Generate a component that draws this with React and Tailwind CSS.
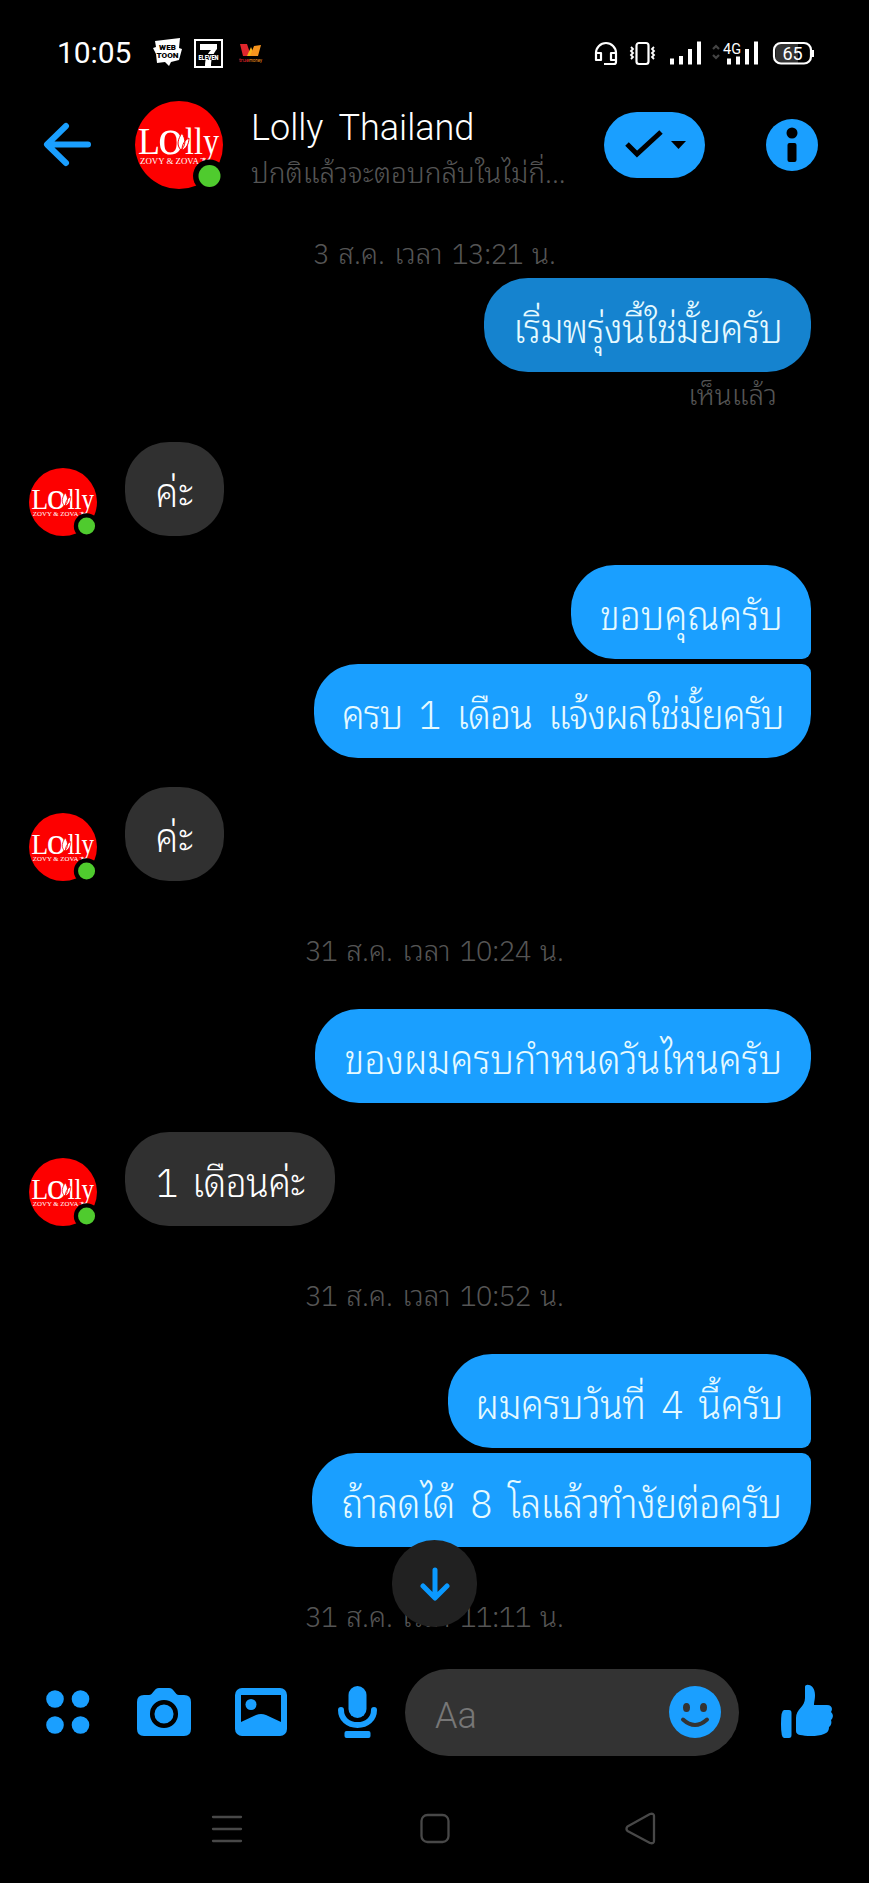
import React from 'react';

const messages = [
  { id: 1, type: 'time', text: '3 ส.ค. เวลา 13:21 น.', box: 'h-[43px] pb-[10px]' },
  { id: 2, type: 'me', text: 'เริ่มพรุ่งนี้ใช่มั้ยครับ', box: 'w-[327px] rounded-[44px] bg-[#1583cf] tracking-[-0.6px]' },
  { id: 3, type: 'seen', text: 'เห็นแล้ว' },
  { id: 4, type: 'them', text: 'ค่ะ', box: 'w-[99px]' },
  { id: 5, type: 'me', text: 'ขอบคุณครับ', box: 'w-[240px] mt-[29px] rounded-[44px] rounded-br-[9px] bg-[#1a9fff]' },
  { id: 6, type: 'me', text: 'ครบ 1 เดือน แจ้งผลใช่มั้ยครับ', box: 'w-[497px] mt-[5px] rounded-[44px] rounded-tr-[9px] bg-[#1a9fff] tracking-[-0.9px] [word-spacing:8px]' },
  { id: 7, type: 'them', text: 'ค่ะ', box: 'w-[99px]', row: 'mt-[29px]' },
  { id: 8, type: 'time', text: '31 ส.ค. เวลา 10:24 น.', box: 'h-[128px] pt-[8px]' },
  { id: 9, type: 'me', text: 'ของผมครบกำหนดวันไหนครับ', box: 'w-[496px] rounded-[44px] bg-[#1a9fff]' },
  { id: 10, type: 'them', text: '1 เดือนค่ะ', box: 'w-[210px] tracking-[-0.6px] [word-spacing:6px]', row: 'mt-[29px]' },
  { id: 11, type: 'time', text: '31 ส.ค. เวลา 10:52 น.', box: 'h-[128px] pt-[8px]' },
  { id: 12, type: 'me', text: 'ผมครบวันที่ 4 นี้ครับ', box: 'w-[363px] rounded-[44px] rounded-br-[9px] bg-[#1a9fff] tracking-[-0.5px] [word-spacing:7px]' },
  { id: 13, type: 'me', text: 'ถ้าลดได้ 8 โลแล้วทำงัยต่อครับ', box: 'w-[499px] mt-[5px] rounded-[44px] rounded-tr-[9px] bg-[#1a9fff] tracking-[-0.6px] [word-spacing:7px]' },
  { id: 14, type: 'time', text: '31 ส.ค. เวลา 11:11 น.', box: 'h-[128px] pt-[8px]' },
];

// Numerals use a face whose "1" has a foot
const MessageText = ({ text, className }) => (
  <span className={className}>
    {text.split(/([\d:]+)/).map((part, i) =>
      i % 2 ? (
        <span key={i} className="leading-[0] tracking-[-0.8px]" style={{fontFamily: '"IBM Plex Sans Thai Looped", Roboto, sans-serif'}}>{part}</span>
      ) : (
        part
      )
    )}
  </span>
);

const Avatar = ({ className }) => (
  <svg className={className} viewBox="0 0 88 88">
    <circle cx="44" cy="44" r="44" fill="#fd0000" />
    <g fill="#fff" fontFamily="Liberation Serif, serif">
      <text x="3" y="53" fontSize="38" textLength="22" lengthAdjust="spacingAndGlyphs">L</text>
      <text x="23" y="53" fontSize="50">o</text>
      <text x="50" y="53" fontSize="38" textLength="34" lengthAdjust="spacingAndGlyphs">lly</text>
      <text x="5" y="62.500" fontSize="8.500" textLength="66" lengthAdjust="spacingAndGlyphs">ZOVY &amp; ZOVA T</text>
    </g>
    <path d="M46 49c-5-5-3-11 1-17 4 7 4 12-1 17zM47 49c0-6 3-10 7-12 0 6-3 11-7 12z" fill="#fff" stroke="#fd0000" strokeWidth="1" />
    <circle cx="74.500" cy="75" r="16.500" fill="#000" />
    <circle cx="74.500" cy="75" r="11" fill="#4fcb2e" />
  </svg>
);

const StatusBar = () => (
  <div className="flex h-[88px] items-center pt-[18px] pl-[57px] pr-[54px]">
    <span className="w-[96px] text-[30px] leading-9 tracking-[-0.1px]">10:05</span>
    <svg className="h-[30px] w-[30px]" viewBox="0 0 30 30">
      <path d="M2 3 27 0l-1 10 3 1-3 11-8 2-2 4-4-4-8 1-1-9-3-6 3-1z" fill="#fff" />
      <text x="6" y="12" fontSize="8" fontWeight="900" fontFamily="Roboto, sans-serif" textLength="17">WEB</text>
      <text x="3.500" y="20" fontSize="8" fontWeight="900" fontFamily="Roboto, sans-serif" textLength="22" lengthAdjust="spacingAndGlyphs">TOON</text>
    </svg>
    <svg className="ml-[11px] h-[29px] w-[29px]" viewBox="0 0 29 29">
      <path d="M0 0h29v29H0z" fill="#fff" />
      <path d="M2 2h25v25H2z" fill="#000" />
      <path d="M6 5h17v5c-4 5-6 9-6 17h-6c0-7 2-12 6-16H6z" fill="#fff" />
      <path d="M4 15h21v6H4z" fill="#000" />
      <text x="4.500" y="20.500" fontSize="6.500" fontWeight="900" fontFamily="Roboto, sans-serif" textLength="20" lengthAdjust="spacingAndGlyphs" fill="#fff">ELEVEN</text>
    </svg>
    <svg className="ml-[15px] h-[22px] w-[26px]" viewBox="0 0 26 22">
      <path d="M2 2h7l4 12H5z" fill="#e0262c" />
      <path d="M13 5l4 9H9z" fill="#f6b21b" />
      <path d="M16 4l7-1-3 11h-8z" fill="#f7941d" />
      <text x="1" y="20" fontSize="5.500" fontFamily="Roboto, sans-serif" textLength="10" lengthAdjust="spacingAndGlyphs" fill="#e0262c">true</text>
      <text x="11" y="20" fontSize="5.500" fontFamily="Roboto, sans-serif" textLength="13" lengthAdjust="spacingAndGlyphs" fill="#f7941d">money</text>
    </svg>
    <svg className="ml-auto h-[26px] w-[222px]" viewBox="0 0 222 26" fill="none" stroke="#fff" strokeWidth="2.200">
      {/* headset */}
      <path d="M3 20V13a10 10 0 0 1 20 0v9q0 2-2 2H11M3 13h5v7H3zM23 13h-5v7h5z" strokeLinejoin="round" />
      {/* vibrate */}
      <rect x="43.500" y="3" width="12" height="21" rx="2.500" />
      <path d="m38 7 2 2-2 2 2 2-2 2 2 2-2 2M61 7l-2 2 2 2-2 2 2 2-2 2 2 2" strokeWidth="1.800" />
      {/* signal */}
      <path d="M79 24.500v-6M88 24.500V16M97 24.500V9M106 24.500V1.500M136 24.500v-6M145 24.500v-8M154 24.500V9M163 24.500V1.500" strokeWidth="4" />
      <path d="m120 9 3-3 3 3M120 15l3 3 3-3" stroke="#444" />
      <text x="130" y="13.500" fontSize="15" fill="#fff" stroke="none" fontFamily="Roboto, sans-serif" textLength="18" lengthAdjust="spacingAndGlyphs">4G</text>
      {/* battery */}
      <rect x="183" y="4" width="22" height="19" fill="#333" stroke="none" />
      <rect x="181" y="3" width="37" height="20.500" rx="7" />
      <path d="M219.500 10v7" strokeWidth="3" />
      <text x="189.500" y="19.500" fontSize="18" fill="#fff" stroke="none" fontFamily="Roboto, sans-serif">65</text>
    </svg>
  </div>
);

const Header = () => (
  <header className="flex h-[113px] items-center pl-[43px] pr-[51px] text-[#1a9fff]">
    <svg className="h-[46px] w-[49px]" viewBox="0 0 49 46" fill="none" stroke="currentColor" strokeWidth="6" strokeLinecap="round" strokeLinejoin="round">
      <path d="M45 22.500H5M23 4 4 22.500 23 41" />
    </svg>
    <Avatar className="ml-[43px] h-[88px] w-[88px]" />
    <div className="ml-[28px] w-[320px] whitespace-nowrap pt-[8px] font-light">
      <h1 className="h-[45px] text-[36px] leading-[46px] text-white [word-spacing:7px]">Lolly Thailand</h1>
      <p className="h-[42px] text-[28px] leading-[42px] text-[#555]" style={{fontFamily: '"Noto Sans Thai Looped", sans-serif'}}>ปกติแล้วจะตอบกลับในไม่กี่...</p>
    </div>
    <button className="ml-auto flex h-[66px] w-[101px] items-center justify-center rounded-[33px] bg-[#1a9fff]">
      <svg className="h-[30px] w-[64px]" viewBox="0 0 64 30">
        <path d="m4 14 10 10L38 2" fill="none" stroke="#000" strokeWidth="5" />
        <path d="M48 11h15l-7.500 8z" fill="#000" />
      </svg>
    </button>
    <svg className="ml-[61px] h-[52px] w-[52px]" viewBox="0 0 52 52">
      <circle cx="26" cy="26" r="26" fill="currentColor" />
      <circle cx="26" cy="14" r="5.500" fill="#000" />
      <rect x="21.500" y="24" width="9" height="19" rx="2" fill="#000" />
    </svg>
  </header>
);

const Message = ({ item }) => {
  if (item.type === 'time') {
    return (
      <div className={`flex shrink-0 items-center justify-center whitespace-nowrap text-[28px] leading-10 text-[#555] [word-spacing:2px] ${item.box}`}>
        <MessageText text={item.text} />
      </div>
    );
  }
  if (item.type === 'seen') {
    return <div className="mr-[92px] h-[70px] shrink-0 self-end whitespace-nowrap text-[28px] leading-[41px] text-[#555]">{item.text}</div>;
  }
  if (item.type === 'them') {
    return (
      <div className={`flex shrink-0 items-end pl-[29px] ${item.row || ''}`}>
        <Avatar className="h-[68px] w-[68px]" />
        <div className={`ml-[28px] flex h-[94px] items-center justify-center whitespace-nowrap rounded-[44px] bg-[#303030] text-[40px] leading-[40px] ${item.box}`}>
          <MessageText text={item.text} className="scale-x-[0.925]" />
        </div>
      </div>
    );
  }
  return (
    <div className={`mr-[58px] flex h-[94px] shrink-0 items-center justify-center self-end whitespace-nowrap text-[40px] leading-[40px] text-[#e6faff] ${item.box}`}>
      <MessageText text={item.text} className="scale-x-[0.93]" />
    </div>
  );
};

const Composer = () => (
  <div className="flex h-[124px] items-center pl-[45px] pr-[36px] text-[#1a9fff]">
    <svg className="h-[46px] w-[46px]" viewBox="0 0 46 46" fill="currentColor">
      <circle cx="10" cy="10" r="8.800" />
      <circle cx="35.500" cy="10" r="8.800" />
      <circle cx="10" cy="36" r="8.800" />
      <circle cx="35.500" cy="36" r="8.800" />
    </svg>
    <svg className="ml-[46px] h-[48px] w-[54px]" viewBox="0 0 54 48">
      <path d="M7 7h5c4 0 5-7 10-7h10c5 0 6 7 10 7h5q7 0 7 7v27q0 7-7 7H7q-7 0-7-7V14q0-7 7-7z" fill="currentColor" />
      <circle cx="27" cy="26" r="11.800" fill="currentColor" stroke="#000" strokeWidth="4.500" />
    </svg>
    <svg className="ml-[44px] h-[48px] w-[52px]" viewBox="0 0 52 48">
      <rect width="52" height="48" rx="7" fill="currentColor" />
      <path d="M6 7h40v27L31 27q-5-2-10 0L6 34z" fill="#000" />
      <circle cx="16" cy="16.500" r="5.500" fill="currentColor" />
    </svg>
    <svg className="ml-[51px] h-[52px] w-[39px]" viewBox="0 0 39 52" fill="currentColor">
      <rect x="10.500" width="18" height="32" rx="9" />
      <path d="M3 24c0 9 7 15 16.500 15S36 33 36 24" fill="none" stroke="currentColor" strokeWidth="6" strokeLinecap="round" />
      <rect x="6.500" y="45" width="26" height="7" rx="2" />
    </svg>
    <div className="ml-[28px] flex h-[87px] w-[334px] items-center justify-between rounded-full bg-[#333] pl-[30px] pr-[18px]">
      <span className="pt-[7px] text-[36px] font-light text-[#777]">Aa</span>
      <svg className="h-[52px] w-[52px]" viewBox="0 0 52 52">
        <circle cx="26" cy="26" r="26" fill="currentColor" />
        <ellipse cx="17.500" cy="21.500" rx="3.500" ry="4.500" fill="#333" />
        <ellipse cx="34.500" cy="21.500" rx="3.500" ry="4.500" fill="#333" />
        <path d="M14 33.500q12 11 24 0" fill="none" stroke="#333" strokeWidth="4" strokeLinecap="round" />
      </svg>
    </div>
    <svg className="ml-[41px] mb-[2px] h-[55px] w-[53px]" viewBox="0 0 53 55" fill="currentColor">
      <path d="M4 26h5q2.500 0 2.500 3v22q0 3-2.500 3H4Q1 54 1 40T4 26z" />
      <path d="M16 47V34c0-9 9-11 9-20V3c0-4 10-3 10 8 0 5-1 7-1 10h13c5 0 6 4 4 7 3 3 2 6 0 8 1 3 0 6-2 7 0 4-2 6-5 7-7 3-19 2-24 1q-4-1-4-4z" />
    </svg>
  </div>
);

const NavBar = () => (
  <nav className="flex h-[109px] items-center pl-[211px] pt-[1px] text-[#484848]">
    <svg className="h-[32px] w-[32px]" viewBox="0 0 32 32" stroke="currentColor" strokeWidth="2.300" strokeLinecap="round">
      <path d="M2 4h28M2 16h28M2 28h28" />
    </svg>
    <svg className="ml-[176px] h-[32px] w-[32px]" viewBox="0 0 32 32" fill="none" stroke="currentColor" strokeWidth="2.300">
      <rect x="2.500" y="2" width="27" height="27" rx="6" />
    </svg>
    <svg className="ml-[174px] h-[34px] w-[32px]" viewBox="0 0 32 34" fill="none" stroke="currentColor" strokeWidth="2.300" strokeLinejoin="round">
      <path d="M2.500 14.500 25 2q4-1 4 2v25q0 3-4 2L2.500 19q-2-2 0-4.500z" />
    </svg>
  </nav>
);

const App = () => {
  return (
    <div className="flex h-[1883px] w-[869px] flex-col overflow-hidden bg-black text-white" style={{fontFamily: 'Roboto, sans-serif'}}>
      <StatusBar />
      <Header />

      {/* Conversation */}
      <main className="relative flex h-[1449px] flex-col pt-[34px] font-light" style={{fontFamily: '"Noto Sans Thai Looped", "Noto Sans Thai", sans-serif'}}>
        {messages.map((item) => (
          <Message key={item.id} item={item} />
        ))}
        <button className="absolute left-[392px] top-[1339px] flex h-[87px] w-[85px] items-center justify-center rounded-full bg-[#212121]">
          <svg className="h-[34px] w-[32px]" viewBox="0 0 32 34" fill="none" stroke="#0a99ff" strokeWidth="5" strokeLinecap="round" strokeLinejoin="round">
            <path d="M16 3v27M4 19l12 12 12-12" />
          </svg>
        </button>
      </main>

      <Composer />
      <NavBar />
    </div>
  );
};

export default App;
